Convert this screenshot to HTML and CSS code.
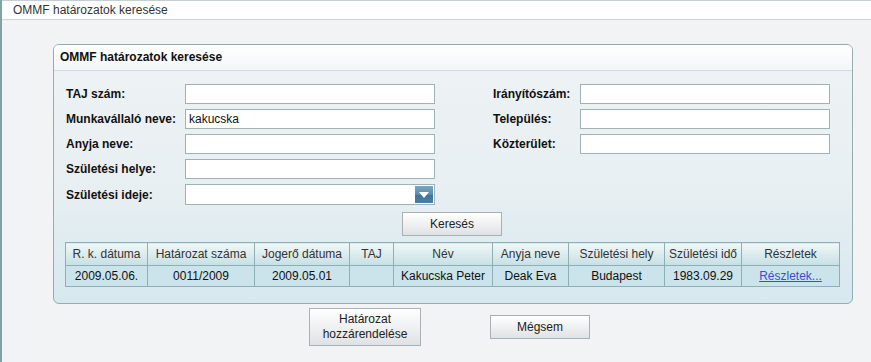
FILE: index.html
```html
<!DOCTYPE html>
<html lang="hu">
<head>
  <meta charset="UTF-8">
  <title>OMMF határozatok keresése</title>
  <link rel="stylesheet" href="styles.css">
</head>
<body>
<div class="window">
  <div class="titlebar">OMMF határozatok keresése</div>
  <div class="content">
    <div class="panel">
      <div class="panel-header">OMMF határozatok keresése</div>
      <div class="panel-body">
        <div class="form">
          <div class="form-col left">
            <label>TAJ szám:</label><input type="text">
            <label>Munkavállaló neve:</label><input type="text" value="kakucska">
            <label>Anyja neve:</label><input type="text">
            <label>Születési helye:</label><input type="text">
            <label>Születési ideje:</label>
            <div class="combo">
              <span class="combo-btn">
                <svg width="10" height="6" viewBox="0 0 10 6"><polygon points="0,0 10,0 5,6" fill="#fff"/></svg>
              </span>
            </div>
          </div>
          <div class="form-col right">
            <label>Irányítószám:</label><input type="text">
            <label>Település:</label><input type="text">
            <label>Közterület:</label><input type="text">
          </div>
        </div>
        <div class="search-row">
          <button class="btn search-btn">Keresés</button>
        </div>
        <table class="results">
          <colgroup>
            <col class="c1"><col class="c2"><col class="c3"><col class="c4"><col class="c5">
            <col class="c6"><col class="c7"><col class="c8"><col class="c9">
          </colgroup>
          <thead>
            <tr>
              <th>R. k. dátuma</th>
              <th>Határozat száma</th>
              <th>Jogerő dátuma</th>
              <th>TAJ</th>
              <th>Név</th>
              <th>Anyja neve</th>
              <th>Születési hely</th>
              <th>Születési idő</th>
              <th>Részletek</th>
            </tr>
          </thead>
          <tbody>
            <tr>
              <td>2009.05.06.</td>
              <td>0011/2009</td>
              <td>2009.05.01</td>
              <td></td>
              <td>Kakucska Peter</td>
              <td>Deak Eva</td>
              <td>Budapest</td>
              <td>1983.09.29</td>
              <td><a href="#">Részletek...</a></td>
            </tr>
          </tbody>
        </table>
      </div>
    </div>
    <div class="actions">
      <button class="btn assign-btn">Határozat<br>hozzárendelése</button>
      <button class="btn cancel-btn">Mégsem</button>
    </div>
  </div>
</div>
</body>
</html>
```

FILE: styles.css
```css
body {
  margin: 0;
  font-family: "Liberation Sans", Arial, sans-serif;
  font-size: 12px;
  color: #222;
  background: #f1f3f5;
}
.window {
  border-left: 2px solid #7fa3a6;
  height: 362px;
  box-sizing: border-box;
}
.titlebar {
  height: 18px;
  line-height: 19px;
  padding-left: 11px;
  background: #fff;
  border-top: 1px solid #c3d0d2;
  border-bottom: 1px solid #cdd5d7;
  color: #333;
}
.content {
  padding: 24px 0 0 51px;
}
.panel {
  width: 800px;
  box-sizing: border-box;
  border: 1px solid #93adb1;
  border-radius: 6px;
  background: linear-gradient(#eef2f4 0%, #e8eff2 55%, #d6e8ee 100%);
  overflow: hidden;
}
.panel-header {
  height: 25px;
  line-height: 25px;
  padding-left: 6px;
  font-weight: bold;
  color: #111;
  background: linear-gradient(#ffffff, #f3f6f7);
  border-bottom: 1px solid #d3dcde;
}
.panel-body {
  padding: 13px 0 16px 11px;
}
.form {
  display: flex;
  gap: 58px;
  padding-left: 1px;
}
.form-col {
  display: grid;
  row-gap: 5px;
  align-items: center;
  align-content: start;
}
.form-col.left {
  grid-template-columns: 119px 250px;
}
.form-col.right {
  grid-template-columns: 87px 250px;
}
label {
  font-weight: bold;
  color: #111;
}
input {
  height: 20px;
  box-sizing: border-box;
  margin: 0;
  padding: 0 3px;
  border: 1px solid #9fb3b7;
  background: #fff;
  font-family: "Liberation Sans", Arial, sans-serif;
  font-size: 12px;
  color: #111;
}
.combo {
  height: 21px;
  box-sizing: border-box;
  border: 1px solid #9fb3b7;
  background: #fff;
  display: flex;
  justify-content: flex-end;
  align-items: center;
  padding-right: 1px;
}
.combo-btn {
  width: 18px;
  height: 17px;
  display: flex;
  align-items: center;
  justify-content: center;
  background: linear-gradient(#7aa6c4 0%, #5a8cb0 50%, #3f7399 51%, #4a7fa4 100%);
}
.search-row {
  display: flex;
  justify-content: center;
  margin-top: 7px;
  padding-right: 13px;
}
.btn {
  font-family: "Liberation Sans", Arial, sans-serif;
  font-size: 12px;
  color: #222;
  border: 1px solid #a9b1b5;
  background: linear-gradient(#ffffff, #dfe2e4);
  padding: 0;
  margin: 0;
}
.search-btn {
  width: 100px;
  height: 24px;
}
.results {
  margin-top: 6px;
  width: 774px;
  border-collapse: collapse;
  table-layout: fixed;
}
.results th,
.results td {
  border: 1px solid #8eb0b5;
  text-align: center;
  font-weight: normal;
  padding: 0;
  white-space: nowrap;
  overflow: hidden;
}
.results th {
  height: 22px;
  color: #333;
  background: linear-gradient(#f0f7f8, #c6e0e4);
}
.results td {
  height: 20px;
  background: #cbe3ea;
  color: #111;
}
.results a {
  color: #3a4fd0;
}
.c1 { width: 82px; }
.c2 { width: 107px; }
.c3 { width: 95px; }
.c4 { width: 44px; }
.c5 { width: 99px; }
.c6 { width: 76px; }
.c7 { width: 96px; }
.c8 { width: 77px; }
.c9 { width: 98px; }
.actions {
  width: 800px;
  box-sizing: border-box;
  padding-right: 7px;
  margin-top: 4px;
  display: flex;
  justify-content: center;
  align-items: center;
  gap: 69px;
}
.assign-btn {
  width: 112px;
  height: 38px;
  line-height: 15px;
}
.cancel-btn {
  width: 100px;
  height: 24px;
}
```
